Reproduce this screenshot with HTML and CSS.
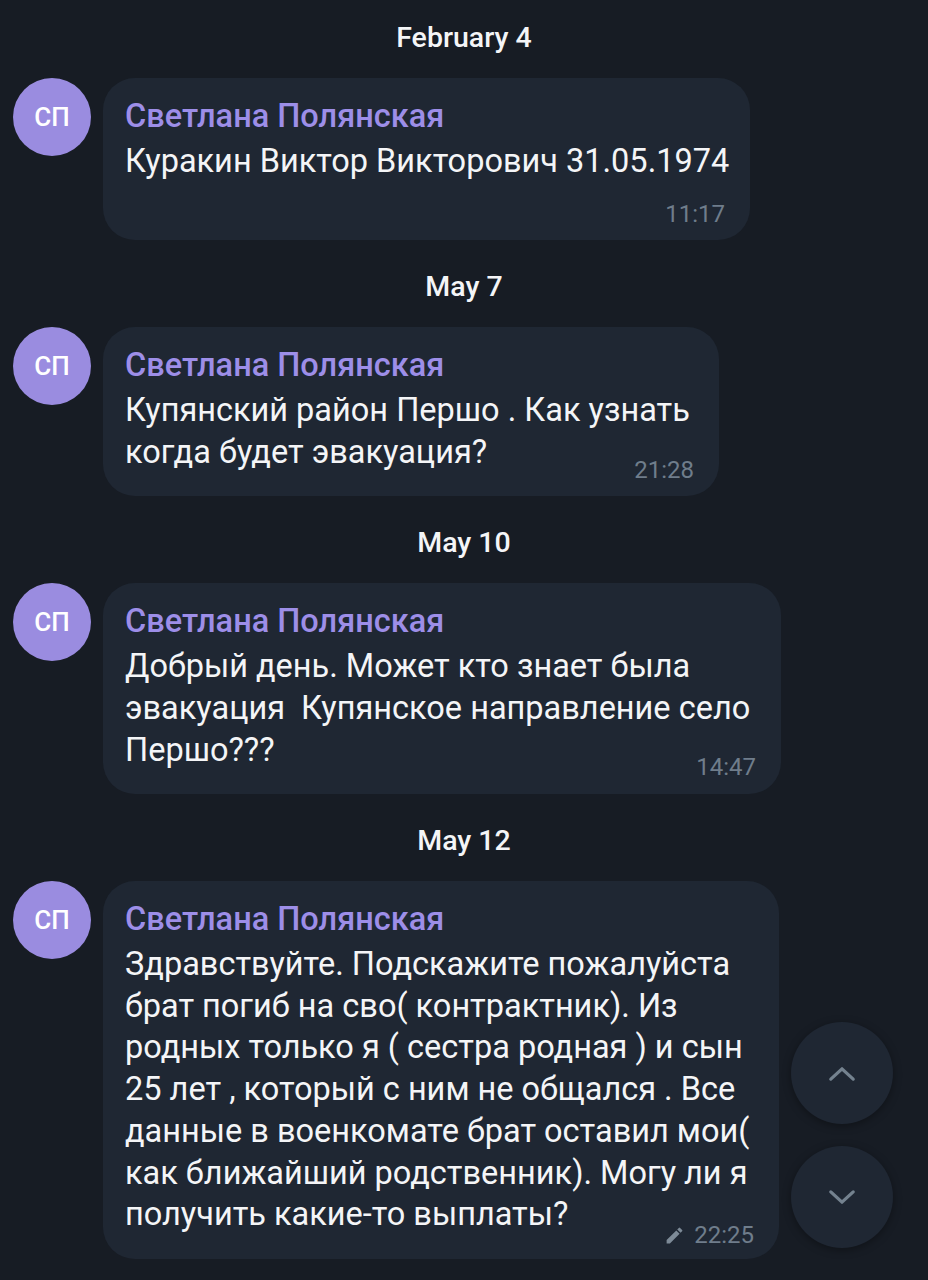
FILE: index.html
```html
<!DOCTYPE html>
<html lang="ru">
<head>
<meta charset="utf-8">
<title>Chat</title>
<link rel="stylesheet" href="styles.css">
</head>
<body>
<main class="chat">
  <div class="date">February 4</div>
  <div class="msg">
    <div class="avatar">СП</div>
    <div class="bubble b1">
      <div class="name">Светлана Полянская</div>
      <div class="line">Куракин Виктор Викторович 31.05.1974</div>
      <div class="last alone"><span class="time">11:17</span></div>
    </div>
  </div>

  <div class="date">May 7</div>
  <div class="msg">
    <div class="avatar">СП</div>
    <div class="bubble b2">
      <div class="name">Светлана Полянская</div>
      <div class="line">Купянский район Першо . Как узнать</div>
      <div class="last"><span class="line">когда будет эвакуация?</span><span class="time">21:28</span></div>
    </div>
  </div>

  <div class="date">May 10</div>
  <div class="msg">
    <div class="avatar">СП</div>
    <div class="bubble b3">
      <div class="name">Светлана Полянская</div>
      <div class="line">Добрый день. Может кто знает была</div>
      <div class="line">эвакуация&nbsp; Купянское направление село</div>
      <div class="last"><span class="line">Першо???</span><span class="time">14:47</span></div>
    </div>
  </div>

  <div class="date">May 12</div>
  <div class="msg">
    <div class="avatar">СП</div>
    <div class="bubble b4">
      <div class="name">Светлана Полянская</div>
      <div class="line">Здравствуйте. Подскажите пожалуйста</div>
      <div class="line">брат погиб на сво( контрактник). Из</div>
      <div class="line">родных только я ( сестра родная ) и сын</div>
      <div class="line">25 лет , который с ним не общался . Все</div>
      <div class="line">данные в военкомате брат оставил мои(</div>
      <div class="line">как ближайший родственник). Могу ли я</div>
      <div class="last"><span class="line">получить какие-то выплаты?</span><span class="time edited"><svg class="pencil" viewBox="0 0 24 24" width="21" height="21"><path d="M3 17.25V21h3.75L17.81 9.94l-3.75-3.75L3 17.25zM20.71 7.04a1 1 0 0 0 0-1.41l-2.34-2.34a1 1 0 0 0-1.41 0l-1.83 1.83 3.75 3.75 1.83-1.83z" fill="currentColor"/></svg>22:25</span></div>
    </div>
  </div>
</main>

<div class="scroll-btns">
  <div class="scroll-btn"><svg viewBox="0 0 30 18" width="28" height="17"><path d="M3 15 L15 4 L27 15" fill="none" stroke="currentColor" stroke-width="3.5" stroke-linecap="round" stroke-linejoin="round"/></svg></div>
  <div class="scroll-btn"><svg viewBox="0 0 30 18" width="28" height="17"><path d="M3 3 L15 14 L27 3" fill="none" stroke="currentColor" stroke-width="3.5" stroke-linecap="round" stroke-linejoin="round"/></svg></div>
</div>
</body>
</html>
```
FILE: styles.css
```css
html, body {
  margin: 0;
  padding: 0;
}
body {
  background: #171c24;
  width: 928px;
  height: 1280px;
  overflow: hidden;
  font-family: Roboto, "Noto Sans", sans-serif;
  color: #f4f5f7;
}
.chat {
  padding-top: 18px;
}
.date {
  font-size: 28.5px;
  font-weight: 500;
  line-height: 40px;
  text-align: center;
  color: #f4f5f7;
  margin-bottom: 20px;
}
.msg {
  display: flex;
  align-items: flex-start;
  gap: 12px;
  padding-left: 13px;
  margin-bottom: 27px;
}
.avatar {
  flex: none;
  width: 78px;
  height: 78px;
  border-radius: 50%;
  background: #9a8ce0;
  color: #ffffff;
  font-size: 26px;
  font-weight: 500;
  display: flex;
  align-items: center;
  justify-content: center;
}
.bubble {
  box-sizing: border-box;
  background: #1f2733;
  border-radius: 32px;
  padding: 20px 25px 22.5px 22px;
}
.b1 { width: 647px; }
.b2 { width: 616px; }
.b3 { width: 678px; }
.b4 { width: 676px; }
.name {
  font-size: 32.5px;
  font-weight: 500;
  line-height: 36px;
  color: #9d8ee8;
  margin-bottom: 7px;
  white-space: nowrap;
}
.line {
  font-size: 32.5px;
  line-height: 41.75px;
  white-space: nowrap;
}
.last {
  display: flex;
  justify-content: space-between;
  align-items: flex-end;
}
.last.alone {
  justify-content: flex-end;
  padding-top: 18.75px;
}
.time {
  display: flex;
  align-items: center;
  gap: 9px;
  font-size: 24px;
  line-height: 24px;
  color: #6f7d8b;
  margin-bottom: -8px;
  margin-left: auto;
}
.time.edited {
  margin-bottom: -11px;
}
.pencil {
  color: #7d8a97;
}
.scroll-btns {
  position: fixed;
  left: 791px;
  top: 1022px;
  display: flex;
  flex-direction: column;
  gap: 22px;
}
.scroll-btn {
  width: 102px;
  height: 102px;
  border-radius: 50%;
  background: #1f2733;
  box-shadow: 0 2px 8px rgba(0, 0, 0, 0.35);
  color: #74828f;
  display: flex;
  align-items: center;
  justify-content: center;
}
```
